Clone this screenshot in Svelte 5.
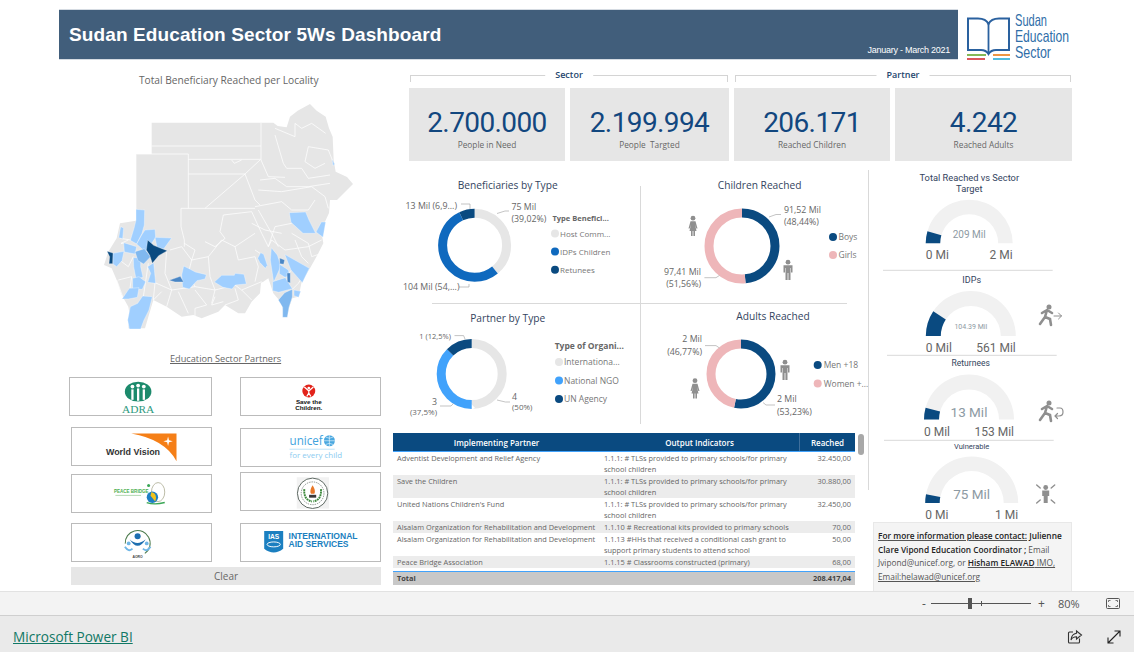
<script>
	const navy = '#0a4a80';

	const kpis = [
		{ value: '2.700.000', label: 'People in Need' },
		{ value: '2.199.994', label: 'People  Targted' },
		{ value: '206.171', label: 'Reached Children' },
		{ value: '4.242', label: 'Reached Adults' }
	];

	// map shapes use a 3x grid over the map box
	const outline =
		'170,68 498,68 535,68 548,78 575,82 585,50 608,32 645,12 665,32 692,50 702,85 713,110 716,180 722,215 756,231 774,252 750,276 726,300 705,300 702,339 690,365 680,400 685,430 670,460 645,505 620,545 615,570 610,590 592,595 585,615 575,650 568,650 560,610 535,580 520,535 505,545 498,548 495,580 470,605 450,640 430,640 390,615 370,635 320,655 295,645 260,650 215,620 175,600 150,685 100,685 105,650 100,620 80,585 65,540 50,505 27,495 40,455 65,415 75,370 123,362 124,330 124,162 170,162';

	const light = '#a0cfff';
	const mid = '#80b8ef';
	const deep = '#4a86c5';
	const regions = [
		[light, '123,328 149,330 148,375 141,400 125,432 106,421 117,385 123,360'],
		[light, '150,390 180,388 182,412 162,442 152,457 125,432 140,405'],
		[light, '180,412 230,414 206,447 186,442'],
		[light, '77,380 86,384 83,416 71,413'],
		[light, '86,428 125,440 120,462 88,456'],
		[light, '53,460 87,454 81,482 65,500 54,492'],
		[light, '115,473 137,473 137,500 144,532 123,537 116,500'],
		[light, '113,535 132,530 152,545 142,568 113,567'],
		[light, '158,500 176,488 182,550 158,547 167,520'],
		[light, '103,565 132,563 127,592 100,597 81,597'],
		[light, '143,588 172,590 162,630 147,660 137,687 103,687 98,660 106,620 128,610'],
		[light, '266,498 286,508 301,516 334,524 330,537 306,542 283,567 263,562 260,525'],
		[light, '358,546 380,526 418,526 420,520 447,523 454,552 421,555 411,567 384,562'],
		[light, '583,338 632,336 642,360 662,400 624,400 588,367'],
		[light, '679,366 692,366 684,412 663,396'],
		[light, '497,458 506,463 517,496 511,505 494,487 488,475'],
		[light, '529,443 547,465 552,480 557,500 536,547 526,480'],
		[light, '569,463 643,505 622,548 588,510'],
		[light, '554,493 580,510 584,527 570,532 553,521'],
		[light, '533,545 571,533 592,566 551,577 533,572'],
		[light, '597,570 617,574 611,592 597,587'],
		[light, '711,178 719,192 714,197'],
		[mid, '120,455 148,446 167,470 146,492 129,482'],
		[mid, '569,578 592,568 592,591 582,622 577,652 563,652 563,622 550,600'],
		[navy, '158,420 176,436 196,444 217,452 191,467 172,490 164,466 154,450'],
		[navy, '36,454 54,459 53,491 42,491 44,470'],
		[deep, '222,541 256,529 266,546 240,546'],
		[deep, '554,474 569,480 566,493 554,491'],
		[deep, '576,519 586,519 586,549 577,546']
	];

	const borders = [
		'170,138 498,138', '124,162 280,162 280,325', '280,178 498,178', '280,222 450,222 495,180',
		'330,325 450,222 480,300 495,315', '498,68 498,180 520,230 570,232', '410,180 418,190 440,180',
		'258,325 480,325', '258,325 258,380 268,420 268,440', '540,85 600,110 600,70 620,85 650,70 692,100',
		'540,105 565,190 575,205 620,205 640,235 705,225', '640,140 700,150 712,180', '640,140 630,185 660,205 690,190',
		'495,240 540,235 575,260 640,260 705,250', '490,270 560,275 650,260 690,290 700,325', '480,320 560,305 590,330 640,330 660,300',
		'470,335 500,400 520,440 540,380 590,370', '375,395 385,345 470,335', '375,395 390,415 360,440 330,425',
		'268,430 300,450 290,480 340,470 380,420 420,440 480,400', '225,450 260,440 290,480 280,520 300,560', '340,470 345,530 360,570 350,610',
		'420,440 430,480 480,470 490,500 480,545', '480,450 495,460', '520,440 530,420 570,450 640,440 680,420', '590,400 640,430 650,470 680,460',
		'600,420 620,470 640,490', '470,370 510,390 560,400', '490,330 530,400 550,440', '215,450 210,520 230,570 215,620', '180,548 230,570 300,560 360,570 420,555 440,570 500,545',
		'250,575 280,640', '300,570 335,615 300,625 300,650', '360,590 350,615 385,605', '420,565 430,600 390,615', '440,570 470,600',
		'60,470 100,500 115,470', '70,540 110,530 105,565', '65,540 85,595', '160,490 145,590', '180,548 175,600 200,575', '100,420 78,430 88,430',
		'75,415 108,420', '590,570 610,550 640,505', '570,530 590,510', '560,610 590,570'
	];

	const panels = [
		{
			x: 393, y: 170, w: 247, h: 133, title: 'Beneficiaries by Type', tx: 507.7, ty: 189, cx: 474.6, cy: 245.3, r: 32, sw: 9,
			parts: [[39.02, '#e6e6e6'], [54.08, '#0f69be'], [6.9, navy]],
			labels: [
				{ x: 457, y: 209, t: '13 Mil (6,9...)', a: 'end' },
				{ x: 511.5, y: 210, t: '75 Mil' },
				{ x: 511.5, y: 222, t: '(39,02%)' },
				{ x: 403, y: 290, t: '104 Mil (54,...)' }
			],
			leaders: ['461,204 470,204 470,209', '497,213.5 505,211 509,211', '459,287 469,287 469,284'],
			legend: { title: 'Type Benefici...', x: 552.5, y: 221, dot: 555, text: 560, size: 8, rows: [['Host Comm...', '#e6e6e6', 233.5], ['IDPs Children', '#0f69be', 251.6], ['Retunees', navy, 269.7]] }
		},
		{
			x: 640, y: 170, w: 228, h: 133, title: 'Children Reached', tx: 759.6, ty: 189, cx: 742, cy: 246, r: 33, sw: 9,
			parts: [[48.44, navy], [51.56, '#eeb6b9']],
			labels: [
				{ x: 784, y: 213, t: '91,52 Mil' },
				{ x: 784, y: 225, t: '(48,44%)' },
				{ x: 701, y: 275, t: '97,41 Mil', a: 'end' },
				{ x: 701, y: 287, t: '(51,56%)', a: 'end' }
			],
			leaders: ['769,217 776,214.5 781,214.5', '704.4,277.7 716,277.7 719.5,275.4'],
			legend: { x: 838, y: 0, dot: 833, text: 838.5, size: 8.5, rows: [['Boys', navy, 237], ['Girls', '#eeb6b9', 255]] },
			man: [788, 270], woman: [693, 226]
		},
		{
			x: 393, y: 303, w: 247, h: 127, title: 'Partner by Type', tx: 507.7, ty: 322, cx: 471.7, cy: 374, r: 30.5, sw: 9,
			parts: [[50, '#e6e6e6'], [37.5, '#41a2fb'], [12.5, navy]],
			labels: [
				{ x: 451, y: 338.5, t: '1 (12,5%)', a: 'end', s: 7.5 },
				{ x: 512, y: 400, t: '4' },
				{ x: 512, y: 410, t: '(50%)', s: 8 },
				{ x: 437, y: 405, t: '3', a: 'end' },
				{ x: 437, y: 415, t: '(37,5%)', a: 'end', s: 8 }
			],
			leaders: ['454.5,335.6 463.6,335.6 465,339', '497,400 505.4,402 510,402', '440,406 451,406 453.5,403.5'],
			legend: { title: 'Type of Organi...', x: 554.7, y: 349, dot: 559, text: 564, size: 8.5, titleSize: 8.5, rows: [['Internationa...', '#e6e6e6', 362], ['National NGO', '#41a2fb', 380.5], ['UN Agency', navy, 399]] }
		},
		{
			x: 640, y: 303, w: 228, h: 127, title: 'Adults Reached', tx: 773, ty: 320, cx: 741, cy: 374, r: 30, sw: 9,
			parts: [[53.23, navy], [46.77, '#eeb6b9']],
			labels: [
				{ x: 702, y: 342, t: '2 Mil', a: 'end' },
				{ x: 702, y: 354.6, t: '(46,77%)', a: 'end' },
				{ x: 777, y: 402, t: '2 Mil' },
				{ x: 777, y: 414.5, t: '(53,23%)' }
			],
			leaders: ['705,345.6 716,345.6 719.5,348', '763,402.5 766,405 775,405'],
			legend: { x: 820, y: 0, dot: 817.7, text: 823.7, size: 8.5, rows: [['Men +18', navy, 365], ['Women +...', '#eeb6b9', 383.5]] },
			man: [785, 370], woman: [695, 388.5]
		}
	];

	const rows = [
		['Adventist Development and Relief Agency', '1.1.1: # TLSs provided to primary schools/for primary school children', '32.450,00'],
		['Save the Children', '1.1.1: # TLSs provided to primary schools/for primary school children', '30.880,00'],
		["United Nations Children's Fund", '1.1.1: # TLSs provided to primary schools/for primary school children', '32.450,00'],
		['Alsalam Organization for Rehabilitation and Development', '1.1.10 # Recreational kits provided to primary schools', '70,00'],
		['Alsalam Organization for Rehabilitation and Development', '1.1.13 #HHs that received a conditional cash grant to support primary students to attend school', '50,00'],
		['Peace Bridge Association', '1.1.15 # Classrooms constructed (primary)', '68,00']
	];

	const gauges = [
		{ y: 170, h: 101, title: ['Total Reached vs Sector', 'Target'], tx: 969.3, ty: [180.5, 191.5], ts: 9.3, cx: 969.2, cy: 243.3, ro: 43.5, ri: 29, f: 0.09,
			val: '209 Mil', vs: 10, vy: 238, min: '0 Mi', max: '2 Mi', ly: 259, ls: 12, line: [883, 1052.7, 270.3] },
		{ y: 271, h: 85, title: ['IDPs'], tx: 971.7, ty: [283], ts: 9, cx: 970.8, cy: 336, ro: 45, ri: 30, f: 0.186,
			val: '104.39 Mil', vs: 7, vy: 328.5, min: '0 Mil', max: '561 Mil', ly: 352, ls: 12, line: [887, 1056.7, 355.3], icon: 'out', ix: 1048, iy: 315 },
		{ y: 356, h: 85, title: ['Returnees'], tx: 970.7, ty: [366], ts: 8.5, cx: 969, cy: 419.5, ro: 45, ri: 30, f: 0.085,
			val: '13 Mil', vs: 13.5, vy: 416.5, min: '0 Mil', max: '153 Mil', ly: 436, ls: 12, line: [884, 1053.7, 440.3], icon: 'back', ix: 1048, iy: 411 },
		{ y: 441, h: 80, title: ['Vulnerable'], tx: 971.7, ty: [449], ts: 7.5, cx: 971.7, cy: 503, ro: 46.5, ri: 32, f: 0.06,
			val: '75 Mil', vs: 13.5, vy: 499, min: '0 Mi', max: '1 Mi', ly: 519, ls: 12, icon: 'still', ix: 1045.7, iy: 494 }
	];

	function sector(g) {
		const pt = (r, f) => {
			const a = Math.PI * (1 - f);
			return `${(g.cx + r * Math.cos(a)).toFixed(2)} ${(g.cy - r * Math.sin(a)).toFixed(2)}`;
		};
		return `M${pt(g.ro, 0)} A${g.ro} ${g.ro} 0 0 1 ${pt(g.ro, g.f)} L${pt(g.ri, g.f)} A${g.ri} ${g.ri} 0 0 0 ${pt(g.ri, 0)}Z`;
	}

	function track(g) {
		return `M${g.cx - g.ro} ${g.cy} A${g.ro} ${g.ro} 0 0 1 ${g.cx + g.ro} ${g.cy} H${g.cx + g.ri} A${g.ri} ${g.ri} 0 0 0 ${g.cx - g.ri} ${g.cy}Z`;
	}

	function offset(parts, i) {
		return -parts.slice(0, i).reduce((sum, p) => sum + p[0], 0);
	}
</script>

{#snippet man(x, y)}
	<g transform="translate({x} {y})" fill="#8f8f8f">
		<circle cy="-7.8" r="2.4" />
		<path d="M-4.5 -4.8H4.5V2.5H3V-2H2.5V10H.4V3H-.4V10H-2.5V-2H-3V2.5H-4.5Z" />
	</g>
{/snippet}

{#snippet woman(x, y)}
	<g transform="translate({x} {y})" fill="#8f8f8f">
		<circle cy="-7.8" r="2.4" />
		<path d="M-2.5 -4.8H2.5L4.5 2.5H3.3L2 -1.5L3.5 5H2V10H.4V5H-.4V10H-2V5H-3.5L-2 -1.5L-3.3 2.5H-4.5Z" />
	</g>
{/snippet}

{#snippet figure(kind, x, y)}
	<g transform="translate({x} {y})" fill="none" stroke="#8f8f8f" stroke-linecap="round">
		{#if kind === 'still'}
			<circle cy="-6.5" r="2.4" fill="#8f8f8f" stroke="none" />
			<path d="M-3.5 -3.5H3.5V2H2V9H-2V2H-3.5Z" fill="#8f8f8f" stroke="none" />
			<path d="M-9 -9L-5.5 -6M9 -9L5.5 -6M-9 9L-5.5 6M9 9L5.5 6" stroke-width="1.4" />
		{:else}
			<circle cx="1" cy="-8" r="2.5" fill="#8f8f8f" stroke="none" />
			<path d="M-1 -5L-3 2L-8 9M-3 2L2 4L3 10M-1 -5L-6 -2M-1 -5L4 -2" stroke-width="2.6" />
			{#if kind === 'out'}
				<path d="M6 1H13.5M10.5 -2L13.5 1L10.5 4" stroke-width="1" />
			{:else}
				<path d="M9 -3H12Q15 -3 15 1Q15 5 11 5H7M9.5 2.5L7 5L9.5 7.5" stroke-width="1.2" />
			{/if}
		{/if}
	</g>
{/snippet}

<div class="page">
	<main class="canvas">
		<header class="top">
			<div class="banner">
				<h1>Sudan Education Sector 5Ws Dashboard</h1>
				<span class="period">January - March 2021</span>
			</div>
			<svg class="brand" viewBox="0 0 110 46" width="110" height="46">
				<path d="M2 5.5H12Q20 5.5 22.5 11Q25 5.5 33 5.5H43V37H30Q25 37 22.5 41Q20 37 15 37H2Z" fill="none" stroke="#2a619f" stroke-width="2" />
				<path d="M22.5 11V41" stroke="#2a619f" stroke-width="1.8" />
				<path d="M1 42H20" stroke="#79b043" stroke-width="1.8" />
				<path d="M1 46H19" stroke="#d8444a" stroke-width="1.8" />
				<path d="M27 42H44" stroke="#ec8b2e" stroke-width="1.8" />
				<path d="M27 46H44" stroke="#3fb5d8" stroke-width="1.8" />
				<g class="brand-text">
					<text x="49" y="12.5" textLength="32" lengthAdjust="spacingAndGlyphs">Sudan</text>
					<text x="49" y="28.5" textLength="54" lengthAdjust="spacingAndGlyphs">Education</text>
					<text x="49" y="44.5" textLength="36" lengthAdjust="spacingAndGlyphs">Sector</text>
				</g>
			</svg>
		</header>

		<div class="body">
			<section class="left">
				<h2 class="map-title">Total Beneficiary Reached per Locality</h2>
				<svg class="map" viewBox="0 0 792 720" width="264" height="240">
					<polygon points={outline} fill="#e6e6e6" />
					{#each borders as points}
						<polyline {points} fill="none" stroke="#fff" stroke-width="2.2" />
					{/each}
					{#each regions as [fill, points]}
						<polygon {points} {fill} stroke="#fff" stroke-width="1" />
					{/each}
				</svg>
				<h3 class="partners-title">Education Sector Partners</h3>
				<div class="logos">
					<div class="logo">
						<svg viewBox="0 0 141 39">
							<ellipse cx="68" cy="14.4" rx="14" ry="10.5" fill="#1c8a6c" />
							<g fill="#fff">
								<circle cx="62" cy="9" r="2" /><circle cx="68" cy="8" r="2" /><circle cx="74" cy="9" r="2" />
								<rect x="60.8" y="12" width="2.4" height="11" /><rect x="66.8" y="11" width="2.4" height="13" /><rect x="72.8" y="12" width="2.4" height="11" />
							</g>
							<text x="68" y="36.5" text-anchor="middle" class="adra">ADRA</text>
						</svg>
					</div>
					<div class="logo">
						<svg viewBox="0 0 141 39">
							<circle cx="68.7" cy="13.7" r="6.8" fill="#e2231a" />
							<path d="M64 9.5L68 13L69.5 13L73.5 9.5M68.7 13V16L66.5 19.5M68.7 16L71 19.5" stroke="#fff" stroke-width="1.3" fill="none" />
							<circle cx="68.7" cy="10.5" r="1.4" fill="#fff" />
							<text x="68.7" y="27" text-anchor="middle" class="stc">Save the</text>
							<text x="68.7" y="34" text-anchor="middle" class="stc">Children.</text>
						</svg>
					</div>
					<div class="logo">
						<svg viewBox="0 0 141 39">
							<path d="M59.7 5.9H107.4V35Q95 12 59.7 5.9Z" fill="#f57f17" />
							<path d="M98.5 9L99.5 13L103.5 14L99.5 15L98.5 19L97.5 15L93.5 14L97.5 13Z" fill="#fff" />
							<text x="33" y="28.7" class="wv">World Vision</text>
						</svg>
					</div>
					<div class="logo">
						<svg viewBox="0 0 141 39">
							<text x="48.4" y="16.7" class="unicef" textLength="35" lengthAdjust="spacingAndGlyphs">unicef</text>
							<circle cx="90.4" cy="12.4" r="5.8" fill="#4aa8e0" />
							<path d="M84.6 12.4H96.2M90.4 6.6V18.2M86.5 8.5Q90.4 11 94.3 8.5M86.5 16.3Q90.4 14 94.3 16.3" stroke="#fff" stroke-width=".6" fill="none" />
							<path d="M48.4 21.3H96" stroke="#8ccbf0" stroke-width=".6" />
							<text x="48.4" y="30.7" class="every">for every child</text>
						</svg>
					</div>
					<div class="logo">
						<svg viewBox="0 0 141 39">
							<text x="41.4" y="19" class="peace">PEACE BRIDGE</text>
							<path d="M43 21.5H70" stroke="#9ccc9c" stroke-width=".8" />
							<ellipse cx="88" cy="18" rx="7" ry="10" fill="none" stroke="#9a9a7a" stroke-width=".7" />
							<circle cx="82" cy="23.5" r="6" fill="#1f7fc4" />
							<path d="M81 18Q88 20 85 28L80 22Z" fill="#f2c21a" />
							<circle cx="78" cy="11" r="1.6" fill="#3aa655" />
							<path d="M76 29Q84 32 95 29" stroke="#3aa655" stroke-width="1.4" fill="none" />
						</svg>
					</div>
					<div class="logo">
						<svg viewBox="0 0 141 39">
							<rect x="56" y="4.5" width="34" height="33" fill="#f2f2f2" />
							<circle cx="72.7" cy="21.4" r="16" fill="#fff" stroke="#55605a" stroke-width="1" />
							<circle cx="72.7" cy="21.4" r="12" fill="none" stroke="#55605a" stroke-width=".7" stroke-dasharray="1.5 1" />
							<path d="M64 17Q63 28 72 30M81.5 17Q82.5 28 73.5 30" fill="none" stroke="#3d8a3d" stroke-width="2" stroke-dasharray="2 .7" />
							<path d="M72.7 13Q76.5 19 74.5 22H71Q69 19 72.7 13Z" fill="#e8792a" />
							<rect x="69" y="23" width="7.5" height="3" fill="#3a3a3a" />
						</svg>
					</div>
					<div class="logo">
						<svg viewBox="0 0 141 39">
							<path d="M53.4 20.7A13 13 0 0 1 78 14A13 13 0 0 1 74 31" fill="none" stroke="#4b7a4b" stroke-width="1.1" />
							<circle cx="66.4" cy="13" r="3.2" fill="#1e6fb0" />
							<path d="M58 16Q66.4 30 75 16Q70 20 66.4 20Q62 20 58 16Z" fill="#1e6fb0" />
							<circle cx="57" cy="20.5" r="2" fill="#6fb6e6" /><circle cx="76" cy="20.5" r="2" fill="#6fb6e6" />
							<path d="M53 24Q57 30 61 26M72 26Q76 30 80 24" stroke="#6fb6e6" stroke-width="2" fill="none" />
							<text x="66.4" y="35.5" text-anchor="middle" class="aoro">AORO</text>
						</svg>
					</div>
					<div class="logo">
						<svg viewBox="0 0 141 39">
							<path d="M21.7 7.4H41.7V26Q31.7 34 21.7 26Z" fill="#1b7fc0" />
							<text x="31.7" y="15.5" text-anchor="middle" class="ias">IAS</text>
							<ellipse cx="31.7" cy="21.5" rx="7" ry="2.6" fill="none" stroke="#fff" stroke-width="1" />
							<text x="47.4" y="15.4" class="intl">INTERNATIONAL</text>
							<text x="47.4" y="24.7" class="intl">AID SERVICES</text>
						</svg>
					</div>
				</div>
				<button class="clear">Clear</button>
			</section>

			<section class="right">
				<div class="groups">
					<div class="group sector"><span>Sector</span></div>
					<div class="group partner"><span>Partner</span></div>
				</div>
				<div class="kpis">
					{#each kpis as kpi}
						<div class="kpi">
							<strong>{kpi.value}</strong>
							<span>{kpi.label}</span>
						</div>
					{/each}
				</div>

				<div class="lower">
					<div class="middle">
						<div class="quad">
							{#each panels as p}
								<svg viewBox="{p.x} {p.y} {p.w} {p.h}" width={p.w} height={p.h} class="panel">
									<text x={p.tx} y={p.ty} text-anchor="middle" class="chart-title">{p.title}</text>
									{#each p.parts as part, i}
										<circle cx={p.cx} cy={p.cy} r={p.r} fill="none" stroke={part[1]} stroke-width={p.sw} pathLength="100"
											stroke-dasharray="{part[0]} {100 - part[0]}" stroke-dashoffset={offset(p.parts, i)}
											transform="rotate(-90 {p.cx} {p.cy})" />
									{/each}
									{#each p.leaders as points}
										<polyline {points} fill="none" stroke="#aaa" stroke-width=".7" />
									{/each}
									{#each p.labels as l}
										<text x={l.x} y={l.y} text-anchor={l.a ?? 'start'} class="data-label" font-size={l.s ?? 8.8}>{l.t}</text>
									{/each}
									{#if p.legend.title}
										<text x={p.legend.x} y={p.legend.y} class="legend-title" font-size={p.legend.titleSize ?? 7.5}>{p.legend.title}</text>
									{/if}
									{#each p.legend.rows as [name, color, y]}
										<circle cx={p.legend.dot} cy={y} r="4" fill={color} />
										<text x={p.legend.text} y={y + 3} class="legend-item" font-size={p.legend.size}>{name}</text>
									{/each}
									{#if p.man}{@render man(p.man[0], p.man[1])}{/if}
									{#if p.woman}{@render woman(p.woman[0], p.woman[1])}{/if}
								</svg>
							{/each}
							<i class="rule-v"></i>
							<i class="rule-h"></i>
						</div>

						<div class="table-wrap">
							<table>
								<thead>
									<tr><th>Implementing Partner</th><th>Output Indicators</th><th>Reached</th></tr>
								</thead>
								<tbody>
									{#each rows as r}
										<tr><td>{r[0]}</td><td>{r[1]}</td><td class="num">{r[2]}</td></tr>
									{/each}
									<tr class="spacer"><td colspan="3"></td></tr>
								</tbody>
								<tfoot>
									<tr><td>Total</td><td></td><td class="num">208.417,04</td></tr>
								</tfoot>
							</table>
							<i class="thumb"></i>
						</div>
					</div>

					<aside class="side">
						<div class="gauges">
							{#each gauges as g}
								<svg viewBox="868 {g.y} 204 {g.h}" width="204" height={g.h}>
									{#each g.title as line, i}
										<text x={g.tx} y={g.ty[i]} text-anchor="middle" class="gauge-title" font-size={g.ts}>{line}</text>
									{/each}
									<path d={track(g)} fill="#f1f1f1" />
									<path d={sector(g)} fill={navy} />
									<text x={g.cx} y={g.vy} text-anchor="middle" class="gauge-value" font-size={g.vs}>{g.val}</text>
									<text x={g.cx - g.ro} y={g.ly} class="gauge-scale" font-size={g.ls}>{g.min}</text>
									<text x={g.cx + g.ro} y={g.ly} text-anchor="end" class="gauge-scale" font-size={g.ls}>{g.max}</text>
									{#if g.line}
										<line x1={g.line[0]} x2={g.line[1]} y1={g.line[2]} y2={g.line[2]} stroke="#d9d9d9" />
									{/if}
									{#if g.icon}{@render figure(g.icon, g.ix, g.iy)}{/if}
								</svg>
							{/each}
						</div>
						<div class="contact">
							<u><b>For more information please contact:</b></u> <b>Julienne</b><br />
							<b>Clare Vipond Education Coordinator ;</b> Email<br />
							Jvipond@unicef.org, or <u><b>Hisham ELAWAD</b> IMO,</u><br />
							<u>Email:helawad@unicef.org</u>
						</div>
					</aside>
				</div>
			</section>
		</div>
	</main>

	<div class="zoombar">
		<span class="step">-</span>
		<div class="slider"><i class="knob"></i><i class="tick"></i></div>
		<span class="step">+</span>
		<span class="pct">80%</span>
		<svg width="14" height="11" viewBox="0 0 14 11" fill="none" stroke="#555">
			<rect x=".5" y=".5" width="13" height="10" rx="1" />
			<path d="M2.5 4V2.5H4.5M9.5 2.5H11.5V4M11.5 7V8.5H9.5M4.5 8.5H2.5V7" stroke-width=".8" />
		</svg>
	</div>

	<footer class="bottom">
		<a href="#top">Microsoft Power BI</a>
		<div class="actions">
			<svg width="16" height="16" viewBox="0 0 16 16" fill="none" stroke="#333" stroke-width="1.1">
				<path d="M6 3H2.5A1 1 0 0 0 1.5 4V13A1 1 0 0 0 2.5 14H11.5A1 1 0 0 0 12.5 13V9.5" />
				<path d="M9.5 2L14.5 6L9.5 10V7.8Q5.5 7.8 4 11Q4.5 5 9.5 4.3Z" />
			</svg>
			<svg width="14" height="14" viewBox="0 0 14 14" fill="none" stroke="#222" stroke-width="1.1">
				<path d="M1 13L13 1M7.5 1H13V6.5M1 7.5V13H6.5" />
			</svg>
		</div>
	</footer>
</div>

<style>
	:global(body) {
		margin: 0;
		background: #fff;
	}

	.page {
		width: 1134px;
		height: 652px;
		overflow: hidden;
		display: flex;
		flex-direction: column;
		font-family: 'Open Sans', 'Liberation Sans', sans-serif;
		color: #666;
	}

	.canvas {
		height: 591px;
		padding: 9px 0 0 59px;
		box-sizing: border-box;
		overflow: hidden;
	}

	.top {
		display: flex;
		gap: 8px;
		height: 51px;
	}

	.banner {
		width: 899px;
		box-sizing: border-box;
		background: #415e7b;
		border-top: 1px solid #d5dbe2;
		border-bottom: 1px solid #d5dbe2;
		padding: 0 8px 0 10px;
		display: flex;
		justify-content: space-between;
		color: #fff;
	}

	h1 {
		margin: 14px 0 0;
		font: bold 19px 'Liberation Sans', sans-serif;
		letter-spacing: 0.11px;
	}

	.period {
		align-self: flex-end;
		margin-bottom: 4px;
		font: 9px 'Liberation Sans', sans-serif;
		letter-spacing: -0.25px;
	}

	.brand {
		margin-top: 4px;
		overflow: visible;
	}

	.brand-text text {
		font: 16.5px 'Liberation Sans', sans-serif;
		fill: #2f6ea8;
	}

	.body {
		display: grid;
		grid-template-columns: 334px 1fr;
	}

	.left {
		width: 326px;
		display: flex;
		flex-direction: column;
	}

	.map-title {
		margin: 13px 0 0 80px;
		font-size: 10.2px;
		font-weight: 400;
		line-height: 14px;
	}

	.map {
		margin: 13px 0 0 36px;
	}

	.partners-title {
		margin: 12px 0 0 111px;
		font-size: 9.2px;
		font-weight: 400;
		line-height: 13px;
		text-decoration: underline;
	}

	.logos {
		margin: 12px 0 0 12px;
		display: grid;
		grid-template-columns: 141px 141px;
		grid-template-rows: 50px 47px 49px 40px;
		column-gap: 28px;
	}

	.logo {
		height: 39px;
		box-sizing: border-box;
		border: 1px solid #bbb;
	}

	.logo:nth-child(1) {
		margin-left: -2px;
		width: 143px;
	}

	.logo:nth-child(4) {
		margin-top: 1px;
	}

	.logo:nth-child(6) {
		margin-top: -2px;
	}

	.logo svg {
		display: block;
		width: 100%;
		height: 100%;
	}

	.adra {
		font: 12px 'Liberation Serif', serif;
		fill: #2f9a80;
	}

	.stc {
		font: bold 6.6px 'Liberation Sans', sans-serif;
		fill: #111;
	}

	.wv {
		font: bold 9.4px 'Liberation Sans', sans-serif;
		fill: #333;
	}

	.unicef {
		font: 13.4px 'Open Sans', sans-serif;
		fill: #3fa3dd;
	}

	.every {
		font: 8.4px 'Open Sans', sans-serif;
		fill: #8ccbf0;
	}

	.peace {
		font: bold 4.8px 'Liberation Sans', sans-serif;
		fill: #4caf50;
	}

	.aoro {
		font: bold 3.6px 'Liberation Sans', sans-serif;
		fill: #444;
	}

	.ias {
		font: bold 7px 'Liberation Sans', sans-serif;
		fill: #fff;
	}

	.intl {
		font: bold 9px 'Liberation Sans', sans-serif;
		fill: #1b7fc0;
	}

	.clear {
		margin: 4px 0 0 12px;
		width: 310px;
		height: 18px;
		padding: 0;
		border: 0;
		background: #e6e6e6;
		color: #666;
		font: 10px 'Open Sans', sans-serif;
	}

	.groups {
		display: flex;
		margin: 15px 0 0 17px;
	}

	.group {
		position: relative;
		height: 7px;
		box-sizing: border-box;
		border: 1px solid #d4d4d4;
		border-bottom: 0;
	}

	.group.sector {
		width: 318px;
		margin-right: 7px;
	}

	.group.partner {
		width: 336px;
	}

	.group span {
		position: absolute;
		left: 50%;
		top: -8px;
		transform: translateX(-50%);
		padding: 0 10px;
		background: #fff;
		color: #24466e;
		font-size: 9px;
		font-weight: 600;
		line-height: 14px;
	}

	.kpis {
		display: grid;
		grid-template-columns: 156px 159px 156px 177px;
		column-gap: 5px;
		margin: 6px 0 0 16px;
		width: 663px;
	}

	.kpi {
		height: 73px;
		background: #e6e6e6;
		display: flex;
		flex-direction: column;
		align-items: center;
	}

	.kpi strong {
		margin-top: 18px;
		font: 400 28px/34px Roboto, sans-serif;
		color: #12477f;
		letter-spacing: -0.6px;
	}

	.kpi span {
		margin-top: -1px;
		font-size: 8.3px;
		line-height: 12px;
		white-space: pre;
	}

	.lower {
		display: grid;
		grid-template-columns: 475px 204px;
		margin-top: 9px;
	}

	.quad {
		position: relative;
		display: grid;
		grid-template-columns: 247px 228px;
		grid-template-rows: 133px 127px;
	}

	.panel {
		display: block;
		overflow: visible;
	}

	.rule-v {
		position: absolute;
		left: 247px;
		top: 16px;
		width: 1px;
		height: 238px;
		background: #d9d9d9;
	}

	.rule-h {
		position: absolute;
		left: 39px;
		right: 21px;
		top: 133px;
		height: 1px;
		background: #d9d9d9;
	}

	.chart-title {
		font-size: 10.2px;
		fill: #33445e;
	}

	.data-label {
		fill: #666;
	}

	.legend-title {
		font-weight: 700;
		fill: #666;
	}

	.legend-item {
		fill: #777;
	}

	.table-wrap {
		position: relative;
		margin-top: 3px;
	}

	table {
		width: 462px;
		table-layout: fixed;
		border-collapse: collapse;
		font-size: 7.4px;
		line-height: 11px;
	}

	th:nth-child(1) {
		width: 207px;
	}

	th:nth-child(2) {
		width: 199px;
	}

	th {
		height: 18px;
		padding: 0;
		background: #0a4a80;
		color: #fff;
		font-size: 8px;
		font-weight: 600;
		border-bottom: 1px solid #41a2fb;
	}

	th:last-child {
		border-left: 1px solid #3f6f9c;
	}

	td {
		padding: 1px 4px 0;
		vertical-align: top;
		color: #666;
	}

	tbody tr:nth-child(even):not(.spacer) td {
		background: #ececec;
	}

	.num {
		text-align: right;
	}

	.spacer td {
		height: 3px;
		padding: 0;
		font-size: 0;
		line-height: 0;
	}

	tfoot td {
		background: #c8c8c8;
		color: #444;
		font-weight: 700;
		border-top: 1px solid #41a2fb;
		padding: 1px 4px;
	}

	.thumb {
		position: absolute;
		left: 465px;
		top: 1px;
		width: 6px;
		height: 21px;
		border-radius: 3px;
		background: #a8a8a8;
	}

	.side {
		position: relative;
		border-left: 1px solid #d9d9d9;
		box-sizing: border-box;
		height: 320px;
	}

	.gauges {
		margin-left: -1px;
		display: flex;
		flex-direction: column;
	}

	.gauges svg {
		display: block;
		overflow: visible;
	}

	.gauges text {
		font-family: Roboto, sans-serif;
	}

	.gauge-title {
		fill: #33445e;
	}

	.gauge-value {
		fill: #8d9aa3;
	}

	.gauge-scale {
		fill: #666;
	}

	.contact {
		position: absolute;
		left: 4px;
		top: 352px;
		width: 199px;
		height: 70px;
		box-sizing: border-box;
		background: #f4f4f4;
		border: 1px solid #e8e8e8;
		padding: 6px 0 0 4px;
		font-size: 8.3px;
		line-height: 13.7px;
		color: #555;
		white-space: nowrap;
	}

	.contact b {
		color: #222;
		font-weight: 600;
	}

	.zoombar {
		height: 24px;
		box-sizing: border-box;
		border-top: 1px solid #e2e2e2;
		background: #f3f3f3;
		display: flex;
		align-items: center;
		padding-left: 922px;
		color: #555;
	}

	.step {
		font-size: 12px;
		width: 9px;
	}

	.slider {
		position: relative;
		width: 100px;
		height: 1px;
		background: #555;
		margin-right: 7px;
	}

	.knob {
		position: absolute;
		left: 37px;
		top: -5px;
		width: 4px;
		height: 11px;
		background: #555;
	}

	.tick {
		position: absolute;
		left: 50px;
		top: -2px;
		width: 1px;
		height: 5px;
		background: #555;
	}

	.pct {
		margin: 0 26px 0 11px;
		font-size: 11px;
	}

	.bottom {
		flex: 1;
		box-sizing: border-box;
		border-top: 1px solid #cfcfcf;
		background: #eaeaea;
		display: flex;
		align-items: center;
		justify-content: space-between;
		padding: 5px 13px 0 13px;
	}

	.bottom a {
		color: #117865;
		font-size: 13.6px;
	}

	.actions {
		display: flex;
		gap: 24px;
		align-items: center;
	}

	.actions svg {
		display: block;
	}
</style>
